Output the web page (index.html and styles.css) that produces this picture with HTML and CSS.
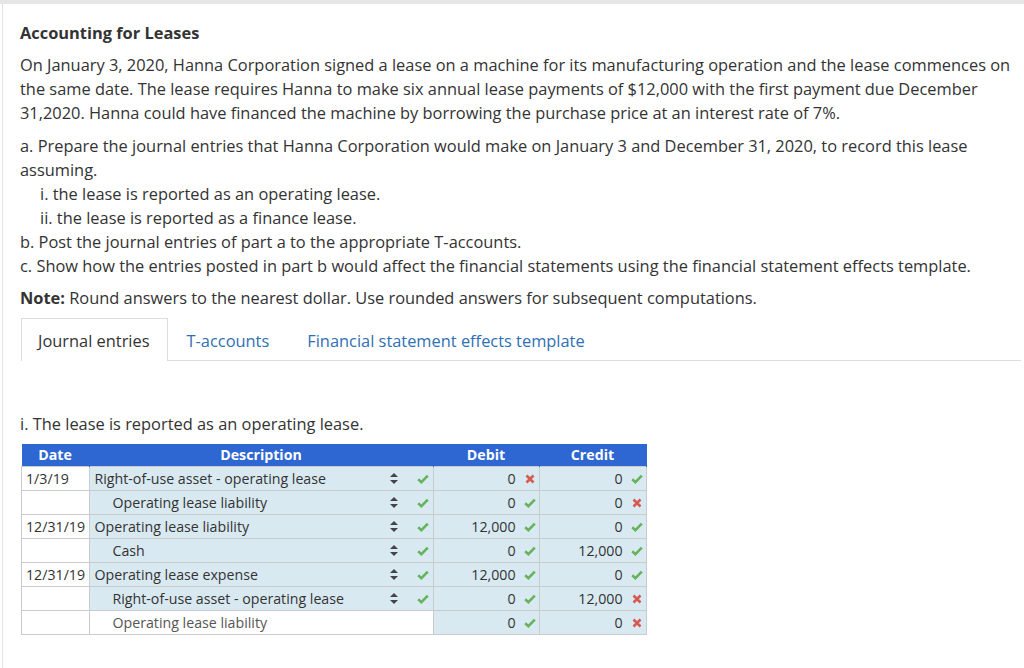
FILE: index.html
```html
<!DOCTYPE html>
<html>
<head>
<meta charset="utf-8">
<link rel="stylesheet" href="styles.css">
</head>
<body>
<svg class="defs" width="0" height="0" aria-hidden="true">
  <symbol id="i-ok" viewBox="0 0 12 10"><path d="M1.2 5.2 L4.4 8.2 L10.8 1.6" fill="none" stroke="#67b35b" stroke-width="2.6" stroke-linecap="butt" stroke-linejoin="miter"/></symbol>
  <symbol id="i-bad" viewBox="0 0 10 10"><path d="M1.5 1.5 L8.5 8.5 M8.5 1.5 L1.5 8.5" fill="none" stroke="#d65a4f" stroke-width="2.6"/></symbol>
</svg>
<div class="topband"></div>
<div class="panel">
  <h1 class="title">Accounting for Leases</h1>
  <p class="para">On January 3, 2020, Hanna Corporation signed a lease on a machine for its manufacturing operation and the lease commences on the same date. The lease requires Hanna to make six annual lease payments of $12,000 with the first payment due December 31,2020. Hanna could have financed the machine by borrowing the purchase price at an interest rate of 7%.</p>
  <div class="parts">
    <div>a. Prepare the journal entries that Hanna Corporation would make on January 3 and December 31, 2020, to record this lease assuming.</div>
    <div class="sub">i. the lease is reported as an operating lease.</div>
    <div class="sub">ii. the lease is reported as a finance lease.</div>
    <div>b. Post the journal entries of part a to the appropriate T-accounts.</div>
    <div>c. Show how the entries posted in part b would affect the financial statements using the financial statement effects template.</div>
  </div>
  <p class="note"><b>Note:</b> Round answers to the nearest dollar. Use rounded answers for subsequent computations.</p>

  <div class="tabs">
    <div class="tab active">Journal entries</div>
    <div class="tab">T-accounts</div>
    <div class="tab">Financial statement effects template</div>
  </div>

  <p class="caption">i. The lease is reported as an operating lease.</p>

  <table class="je">
    <thead>
      <tr><th class="c-date">Date</th><th class="c-desc">Description</th><th class="c-amt">Debit</th><th class="c-amt2">Credit</th></tr>
    </thead>
    <tbody>
      <tr>
        <td class="date">1/3/19</td>
        <td class="desc"><div class="dcell"><span class="dtext">Right-of-use asset - operating lease</span><span class="sort"></span><svg class="mk"><use href="#i-ok"/></svg></div></td>
        <td class="amt"><div class="acell"><span>0</span><svg class="mk x"><use href="#i-bad"/></svg></div></td>
        <td class="amt"><div class="acell"><span>0</span><svg class="mk"><use href="#i-ok"/></svg></div></td>
      </tr>
      <tr>
        <td class="date"></td>
        <td class="desc"><div class="dcell"><span class="dtext ind">Operating lease liability</span><span class="sort"></span><svg class="mk"><use href="#i-ok"/></svg></div></td>
        <td class="amt"><div class="acell"><span>0</span><svg class="mk"><use href="#i-ok"/></svg></div></td>
        <td class="amt"><div class="acell"><span>0</span><svg class="mk x"><use href="#i-bad"/></svg></div></td>
      </tr>
      <tr>
        <td class="date">12/31/19</td>
        <td class="desc"><div class="dcell"><span class="dtext">Operating lease liability</span><span class="sort"></span><svg class="mk"><use href="#i-ok"/></svg></div></td>
        <td class="amt"><div class="acell"><span>12,000</span><svg class="mk"><use href="#i-ok"/></svg></div></td>
        <td class="amt"><div class="acell"><span>0</span><svg class="mk"><use href="#i-ok"/></svg></div></td>
      </tr>
      <tr>
        <td class="date"></td>
        <td class="desc"><div class="dcell"><span class="dtext ind">Cash</span><span class="sort"></span><svg class="mk"><use href="#i-ok"/></svg></div></td>
        <td class="amt"><div class="acell"><span>0</span><svg class="mk"><use href="#i-ok"/></svg></div></td>
        <td class="amt"><div class="acell"><span>12,000</span><svg class="mk"><use href="#i-ok"/></svg></div></td>
      </tr>
      <tr>
        <td class="date">12/31/19</td>
        <td class="desc"><div class="dcell"><span class="dtext">Operating lease expense</span><span class="sort"></span><svg class="mk"><use href="#i-ok"/></svg></div></td>
        <td class="amt"><div class="acell"><span>12,000</span><svg class="mk"><use href="#i-ok"/></svg></div></td>
        <td class="amt"><div class="acell"><span>0</span><svg class="mk"><use href="#i-ok"/></svg></div></td>
      </tr>
      <tr>
        <td class="date"></td>
        <td class="desc"><div class="dcell"><span class="dtext ind">Right-of-use asset - operating lease</span><span class="sort"></span><svg class="mk"><use href="#i-ok"/></svg></div></td>
        <td class="amt"><div class="acell"><span>0</span><svg class="mk"><use href="#i-ok"/></svg></div></td>
        <td class="amt"><div class="acell"><span>12,000</span><svg class="mk x"><use href="#i-bad"/></svg></div></td>
      </tr>
      <tr>
        <td class="date"></td>
        <td class="desc plain"><div class="dcell"><span class="dtext ind muted">Operating lease liability</span></div></td>
        <td class="amt"><div class="acell"><span>0</span><svg class="mk"><use href="#i-ok"/></svg></div></td>
        <td class="amt"><div class="acell"><span>0</span><svg class="mk x"><use href="#i-bad"/></svg></div></td>
      </tr>
    </tbody>
  </table>
</div>
</body>
</html>
```

FILE: styles.css
```css
html, body {
  margin: 0;
  padding: 0;
  background: #ffffff;
}
body {
  font-family: "Open Sans", "Liberation Sans", sans-serif;
  color: #333333;
  font-size: 16.4px;
  line-height: 24px;
}
.defs {
  position: absolute;
  width: 0;
  height: 0;
  overflow: hidden;
}
.topband {
  height: 4px;
  background: #e6e6e6;
}
.panel {
  margin-left: 2px;
  border-left: 1px solid #e3e3e3;
  padding: 17px 3px 40px 17px;
  min-height: 600px;
}
.title {
  margin: 0;
  font-size: 16.4px;
  font-weight: 700;
  line-height: 24px;
  color: #333;
}
.para {
  margin: 8px 0 0 0;
  width: 1000px;
}
.parts {
  margin-top: 9px;
  width: 1000px;
}
.sub {
  padding-left: 20px;
}
.note {
  margin: 8px 0 0 0;
}
.note b {
  font-weight: 700;
}
.tabs {
  display: flex;
  margin-top: 8px;
  margin-left: 1px;
  border-bottom: 1px solid #dcdcdc;
  height: 42px;
}
.tab {
  padding: 0 18px;
  line-height: 43px;
  height: 43px;
  color: #2f6fb5;
  box-sizing: border-box;
  border: 1px solid transparent;
  border-bottom: none;
}
.tab.active {
  color: #333;
  border-color: #dcdcdc;
  background: #fff;
  padding: 0 17px 0 16px;
}
.caption {
  margin: 51px 0 0 0;
}
.je {
  margin-top: 8px;
  margin-left: 1px;
  border-collapse: collapse;
  font-size: 14.2px;
  line-height: 22px;
}
.je th {
  background: #2e67d1;
  color: #fff;
  font-weight: 700;
  height: 22px;
  padding: 0;
  text-align: center;
  border-right: 1px solid #2e67d1;
}
.c-date { width: 67px; }
.c-desc { width: 343px; }
.c-amt { width: 105px; }
.c-amt2 { width: 106px; }
.je td {
  border: 1px solid #c9cbcc;
  height: 23px;
  padding: 0;
  background: #d9e9f1;
}
.je td.date {
  background: #fff;
  padding-left: 4px;
}
.je td.desc.plain {
  background: #fff;
}
.dcell {
  display: flex;
  align-items: center;
  padding-left: 5px;
}
.dtext {
  flex: 1;
}
.dtext.ind {
  padding-left: 18px;
}
.muted {
  color: #555;
}
.sort {
  width: 8px;
  height: 11px;
  margin-right: 19px;
  position: relative;
}
.sort::before, .sort::after {
  content: "";
  position: absolute;
  left: 0;
  border-left: 4px solid transparent;
  border-right: 4px solid transparent;
}
.sort::before {
  top: 0;
  border-bottom: 4px solid #444;
}
.sort::after {
  bottom: 0;
  border-top: 4px solid #444;
}
.acell {
  display: flex;
  justify-content: flex-end;
  align-items: center;
}
.mk {
  width: 12px;
  height: 10px;
  margin-left: 8px;
  margin-right: 3px;
  flex: none;
}
.mk.x {
  width: 10px;
  height: 10px;
  margin-left: 9px;
  margin-right: 4px;
}
.dcell .mk {
  margin-left: 0;
  margin-right: 4px;
}
```
